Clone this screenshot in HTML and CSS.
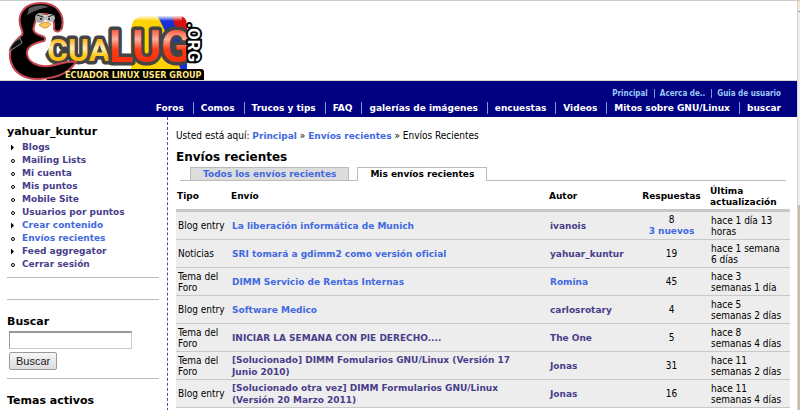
FILE: index.html
```html
<!DOCTYPE html>
<html lang="es">
<head>
<meta charset="utf-8">
<title>Envíos recientes | EcuaLUG</title>
<link rel="stylesheet" href="styles.css">
</head>
<body>
<div class="window">
<div class="page">
  <header>
    <a class="logo" href="#">
      <svg width="216" height="80" viewBox="0 0 216 80" role="img" aria-label="EcuaLUG.org">
        <defs>
          <linearGradient id="gold" x1="0" y1="0" x2="0" y2="1"><stop offset=".2" stop-color="#ffb000"/><stop offset=".45" stop-color="#fff0b8"/><stop offset=".65" stop-color="#ffc91a"/><stop offset="1" stop-color="#f7a400"/></linearGradient>
          <linearGradient id="red" x1="0" y1="0" x2="0" y2="1"><stop offset=".15" stop-color="#ff5030"/><stop offset=".35" stop-color="#ffb0a0"/><stop offset=".55" stop-color="#ff3a14"/><stop offset="1" stop-color="#f52a00"/></linearGradient>
          <linearGradient id="shine" x1="0" y1="0" x2="0" y2="1"><stop offset="0" stop-color="#fff" stop-opacity=".9"/><stop offset="1" stop-color="#fff" stop-opacity="0"/></linearGradient>
          <clipPath id="flag"><path d="M131 27Q133 16 143 15H180Q187 16 187 24V72H131Z"/></clipPath>
        </defs>
        <g clip-path="url(#flag)">
          <path fill="#ffd200" d="M128 14H162L180 44V72H128Z"/>
          <path fill="#1631d6" d="M157 14H173Q177 34 192 54V72H182Q168 34 157 14Z"/>
          <path fill="#d80f12" d="M172 14H190V50Q176 34 172 14Z"/>
          <path fill="url(#shine)" d="M138 15H182V20H136Z"/>
        </g>
        <path fill="#000" d="M58 68H201Q204 68 204 71V79H46Z"/>
        <g class="logo-name">
          <text class="cua" x="47" y="60">CUA</text>
          <text class="lug" x="109" y="61">LUG</text>
        </g>
        <path fill="#fff" d="M30 18C34 12 54 12 57 22L54 30C52 38 50 46 46 52C42 58 34 62 27 60L22 48L30 38Z"/>
        <path fill="#000" stroke="#c4454f" stroke-width="2" stroke-linejoin="round" d="M62 27C65 12 56 2 41 2C25 2 18 12 20 23C21 29 24 31 22 34C13 41 9 48 10 57C12 71 24 79 40 78C56 77 68 73 76 61C66 59 60 64 49 65C37 66 28 61 27 53C26 46 34 42 44 40C46 38 45 36 42 35C35 33 32 30 34 25C35 21 36 18 38 14C45 11 56 14 54 28C56 32 60 31 62 27Z"/>
        <path fill="#fff" opacity=".35" d="M29 7Q40 2 49 6Q37 8 27 14Z"/>
        <path fill="#111" stroke="#888" d="M20 37Q11 42 9 50Q15 47 22 42Z"/>
        <ellipse cx="40" cy="17" rx="5" ry="5" fill="#aaa"/><ellipse cx="50" cy="17" rx="5" ry="4" fill="#bbb"/>
        <path stroke="#222" stroke-width="1" fill="none" d="M37 14L43 16M48 16L53 14"/>
        <circle cx="41" cy="18" r="1" fill="#111"/><circle cx="49" cy="18" r="1" fill="#111"/>
        <path fill="#ffc45c" stroke="#d9963a" d="M39 24Q45 19 51 23Q48 28 44 27Z"/>
        <text class="logo-org" transform="translate(188 22) rotate(90)">.ORG</text>
        <text class="logo-tag" x="65" y="77">ECUADOR LINUX USER GROUP</text>
      </svg>
    </a>
    <div class="bar">
      <nav class="secondary"><a href="#">Principal</a><a href="#">Acerca de..</a><a href="#">Guia de usuario</a></nav>
      <nav class="primary"><a href="#">Foros</a><a href="#">Comos</a><a href="#">Trucos y tips</a><a href="#">FAQ</a><a href="#">galerías de imágenes</a><a href="#">encuestas</a><a href="#">Videos</a><a href="#">Mitos sobre GNU/Linux</a><a href="#">buscar</a></nav>
    </div>
  </header>
  <div class="columns">
    <aside>
      <section class="block user">
        <h2>yahuar_kuntur</h2>
        <ul>
          <li class="more"><a href="#">Blogs</a></li>
          <li><a href="#">Mailing Lists</a></li>
          <li><a href="#">Mi cuenta</a></li>
          <li><a href="#">Mis puntos</a></li>
          <li><a href="#">Mobile Site</a></li>
          <li><a href="#">Usuarios por puntos</a></li>
          <li class="more"><a class="new" href="#">Crear contenido</a></li>
          <li><a class="new" href="#">Envíos recientes</a></li>
          <li class="more"><a href="#">Feed aggregator</a></li>
          <li><a href="#">Cerrar sesión</a></li>
        </ul>
      </section>
      <section class="block empty"></section>
      <section class="block">
        <form>
          <h3><label for="search">Buscar</label></h3>
          <input id="search" type="text">
          <button type="button">Buscar</button>
        </form>
      </section>
      <section class="block"><h3>Temas activos</h3></section>
    </aside>
    <main>
      <p class="crumbs">Usted está aquí: <a href="#">Principal</a> » <a href="#">Envíos recientes</a> » Envíos Recientes</p>
      <h1>Envíos recientes</h1>
      <nav class="tabs"><a href="#">Todos los envíos recientes</a><a class="active" href="#">Mis envíos recientes</a></nav>
      <table>
        <colgroup><col class="c-type"><col class="c-post"><col class="c-author"><col class="c-replies"><col class="c-date"></colgroup>
        <thead><tr><th>Tipo</th><th>Envío</th><th>Autor</th><th>Respuestas</th><th>Última actualización</th></tr></thead>
        <tbody>
          <tr><td>Blog entry</td><td><a class="new" href="#">La liberación informática de Munich</a></td><td><a href="#">ivanois</a></td><td>8<br><a class="new" href="#">3 nuevos</a></td><td>hace 1 día 13 horas</td></tr>
          <tr><td>Noticias</td><td><a class="new" href="#">SRI tomará a gdimm2 como versión oficial</a></td><td><a href="#">yahuar_kuntur</a></td><td>19</td><td>hace 1 semana 6 días</td></tr>
          <tr><td>Tema del Foro</td><td><a class="new" href="#">DIMM Servicio de Rentas Internas</a></td><td><a class="new" href="#">Romina</a></td><td>45</td><td>hace 3 semanas 1 día</td></tr>
          <tr><td>Blog entry</td><td><a class="new" href="#">Software Medico</a></td><td><a href="#">carlosrotary</a></td><td>4</td><td>hace 5 semanas 2 días</td></tr>
          <tr><td>Tema del Foro</td><td><a href="#">INICIAR LA SEMANA CON PIE DERECHO....</a></td><td><a href="#">The One</a></td><td>5</td><td>hace 8 semanas 4 días</td></tr>
          <tr><td>Tema del Foro</td><td><a href="#">[Solucionado] DIMM Fomularios GNU/Linux (Versión 17 Junio 2010)</a></td><td><a href="#">Jonas</a></td><td>31</td><td>hace 11 semanas 2 días</td></tr>
          <tr><td>Blog entry</td><td><a href="#">[Solucionado otra vez] DIMM Formularios GNU/Linux (Versión 20 Marzo 2011)</a></td><td><a href="#">Jonas</a></td><td>16</td><td>hace 11 semanas 4 días</td></tr>
        </tbody>
      </table>
    </main>
  </div>
</div>
<div class="track"><span class="arrow"></span><span class="thumb"></span></div>
</div>
</body>
</html>
```
FILE: styles.css
```css
*, *::before { box-sizing: border-box; }
body {
  margin: 0;
  background: #fff;
  color: #000;
  font: 10px/11px "DejaVu Sans Condensed", "DejaVu Sans", sans-serif;
}
h1, h2, h3, p, ul { margin: 0; padding: 0; }
h1, h2, h3 { font-family: "DejaVu Sans", sans-serif; }
a { color: #483d8b; font-weight: bold; text-decoration: none; }
li a, p a, td a, th, .tabs a, .primary a { font-family: "DejaVu Sans", sans-serif; font-size: 9px; }
a.new, .crumbs a, .tabs a { color: #4169e1; }

.window { display: flex; height: 100vh; overflow: hidden; border-top: 1px solid #ccc; }
.page { flex: 1; display: flex; flex-direction: column; min-width: 0; }
.track { width: 3px; display: flex; flex-direction: column; background: #eee; border-left: 1px solid #d4d4d4; }
.arrow { height: 11px; background: #f7e8cf; border-bottom: 1px solid #999; }
.thumb { margin-top: 47vh; flex: 1; background: #c9bda9; }

.logo { display: block; height: 80px; border-bottom: 1px solid #d8d8d0; }
.logo svg { display: block; }
.logo-name { font-family: Roboto, sans-serif; font-weight: bold; }
.logo-name text { stroke: #444; stroke-width: 7px; stroke-linejoin: round; paint-order: stroke; }
.cua { font-size: 32px; fill: url(#gold); }
.lug { font-size: 44px; fill: url(#red); }
.logo-org { font: bold 17px Roboto, sans-serif; fill: #fff; stroke: #000; stroke-width: 4px; paint-order: stroke; }
.logo-tag { font: bold 9px "DejaVu Sans Condensed", sans-serif; fill: #ffe680; }

.bar { background: #000080; padding: 8px 16px 3px 8px; }
.bar nav { display: flex; justify-content: flex-end; }
.bar a + a { border-left: 1px solid #6f9fd8; }
.secondary { font-size: 8px; line-height: 9px; }
.secondary a { color: #9cc8f5; padding: 0 6px 0 5px; }
.primary { padding-top: 4px; line-height: 12px; }
.primary a { color: #fff; padding: 0 9px 0 7px; }
.bar a:last-child { padding-right: 0; }

.columns { flex: 1; display: flex; }
aside { width: 168px; padding: 8px 8px 0 7px; border-right: 1px dashed #4a4ab8; }
.block { border-bottom: 1px solid #bbb; padding-bottom: 8px; margin-bottom: 15px; }
.user { margin-bottom: 0; padding-bottom: 6px; }
.empty { height: 22px; }
h2 { font-size: 11px; line-height: 14px; }
h3 { font-size: 11px; line-height: 13px; }
.user ul { padding: 2px 0 0 15px; list-style: none; }
.user li { line-height: 13px; display: flex; align-items: center; }
.user li::before {
  content: ""; flex: none; width: 4px; height: 4px; margin: 0 7px 0 -11px;
  border: 1px solid #000; border-radius: 50%;
}
.user li.more::before {
  width: 3px; height: 6px; margin-right: 8px; border: 0; border-radius: 0;
  background: #000; clip-path: polygon(0 0, 100% 50%, 0 100%);
}
input { display: block; width: 123px; height: 18px; margin: 3px 0 3px 2px; padding: 1px 2px; border: 1px solid #ccc; border-top: 2px solid #999; border-left-color: #999; background: #fff; }
button {
  display: block; height: 18px; margin-left: 2px; padding: 0 6px; border: 1px solid #999; border-radius: 2px;
  background: linear-gradient(#f6f6f6, #ddd); color: #222; font: 11px "Liberation Sans", sans-serif;
}

main { flex: 1; min-width: 0; padding: 13px 7px 0 8px; }
h1 { font-size: 12px; line-height: 16px; margin: 7px 0 2px; }
.tabs { display: flex; align-items: flex-end; gap: 8px; margin: 0 4px; padding-left: 10px; border-bottom: 1px solid #bbb; }
.tabs a { padding: 1px 12px 0; line-height: 11px; background: #ddd; border: 1px solid #bbb; border-bottom: 0; }
.tabs a.active { background: #fff; color: #000; margin-bottom: -1px; padding-bottom: 1px; }
table { width: 100%; table-layout: fixed; border-collapse: separate; border-spacing: 0; margin-top: 3px; }
.c-type { width: 54px; } .c-author { width: 86px; } .c-replies { width: 75px; } .c-date { width: 81px; }
th { height: 28px; padding: 0 1px; text-align: left; border-bottom: 3px solid #c8c8c8; }
td { height: 28px; padding: 0 2px; background: #ededed; border-bottom: 1px solid #c8c8c8; }
td:nth-child(2) { padding-right: 16px; }
td:nth-child(5) { padding-right: 6px; }
th:nth-child(4), td:nth-child(4) { text-align: center; }
```
